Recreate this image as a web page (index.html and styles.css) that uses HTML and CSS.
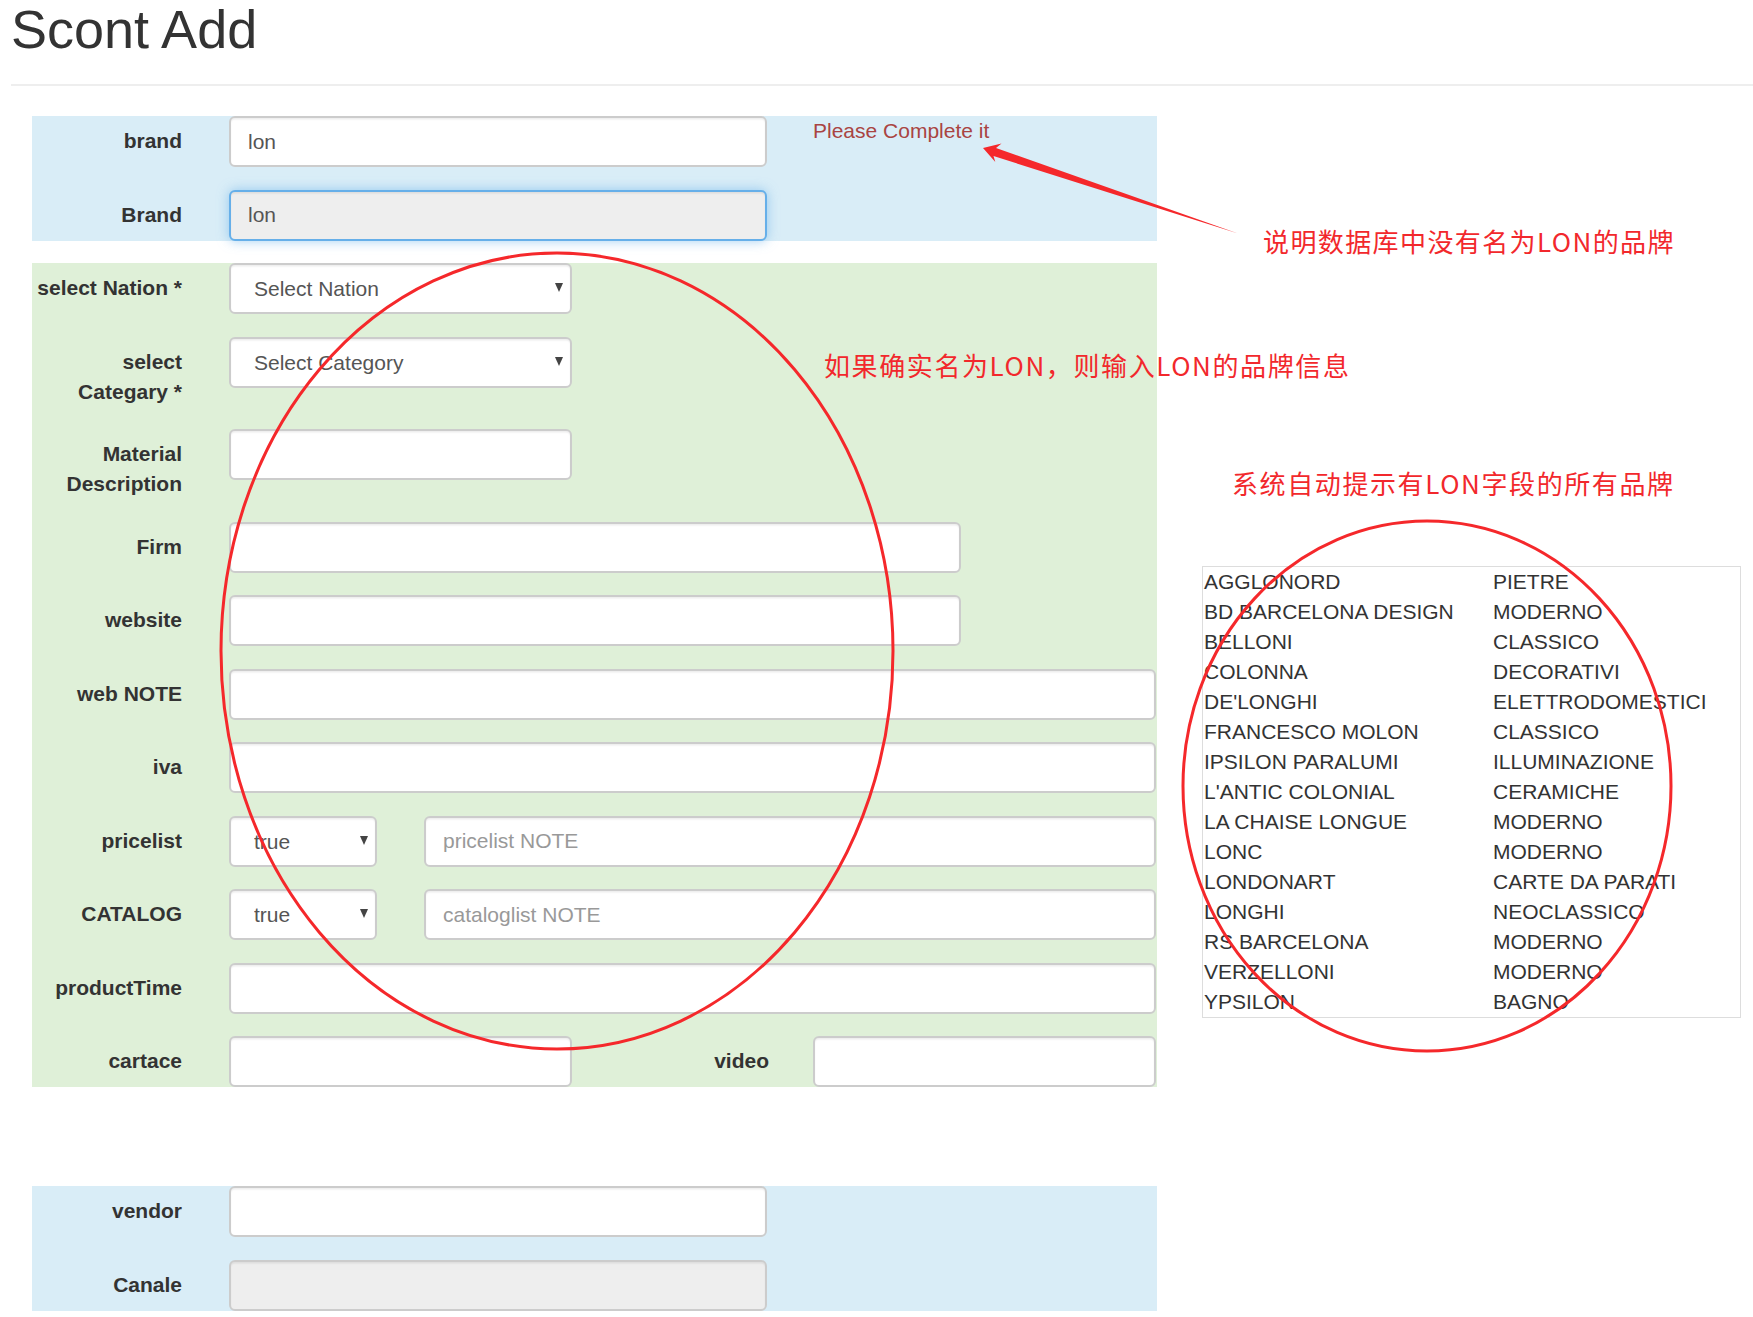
FILE: index.html
```html
<!DOCTYPE html>
<html lang="it">
<head>
<meta charset="utf-8">
<title>Scont Add</title>
<link rel="stylesheet" href="styles.css">
</head>
<body>
<div class="page">
  <header class="page-header">
    <h1>Scont Add</h1>
  </header>
  <hr class="rule">

  <form class="scont-form">
    <section class="band band-info">
      <div class="row">
        <label class="lbl">brand</label>
        <input class="ctl w-half" type="text" value="lon">
        <span class="help">Please Complete it</span>
      </div>
      <div class="row">
        <label class="lbl">Brand</label>
        <input class="ctl w-half ctl-ro ctl-focus" type="text" value="lon" readonly>
      </div>
    </section>

    <section class="band band-success">
      <div class="row">
        <label class="lbl">select Nation *</label>
        <div class="sel w-third"><select class="ctl"><option>Select Nation</option></select></div>
      </div>
      <div class="row">
        <label class="lbl">select Categary *</label>
        <div class="sel w-third"><select class="ctl"><option>Select Category</option></select></div>
      </div>
      <div class="row">
        <label class="lbl">Material Description</label>
        <input class="ctl w-third" type="text">
      </div>
      <div class="row">
        <label class="lbl">Firm</label>
        <input class="ctl w-wide" type="text">
      </div>
      <div class="row">
        <label class="lbl">website</label>
        <input class="ctl w-wide" type="text">
      </div>
      <div class="row">
        <label class="lbl">web NOTE</label>
        <input class="ctl w-full" type="text">
      </div>
      <div class="row">
        <label class="lbl">iva</label>
        <input class="ctl w-full" type="text">
      </div>
      <div class="row">
        <label class="lbl">pricelist</label>
        <div class="sel w-mini"><select class="ctl"><option>true</option><option>false</option></select></div>
        <input class="ctl w-wide note-input" type="text" placeholder="pricelist NOTE">
      </div>
      <div class="row">
        <label class="lbl">CATALOG</label>
        <div class="sel w-mini"><select class="ctl"><option>true</option><option>false</option></select></div>
        <input class="ctl w-wide note-input" type="text" placeholder="cataloglist NOTE">
      </div>
      <div class="row">
        <label class="lbl">productTime</label>
        <input class="ctl w-full" type="text">
      </div>
      <div class="row">
        <label class="lbl">cartace</label>
        <input class="ctl w-third" type="text">
        <label class="lbl lbl-inline">video</label>
        <input class="ctl w-third" type="text">
      </div>
    </section>

    <section class="band band-info band-vendor">
      <div class="row">
        <label class="lbl">vendor</label>
        <input class="ctl w-half" type="text">
      </div>
      <div class="row">
        <label class="lbl">Canale</label>
        <input class="ctl w-half ctl-ro" type="text" readonly>
      </div>
    </section>
  </form>

  <div class="suggest">
    <div class="sg-row"><span>AGGLONORD</span><span>PIETRE</span></div>
    <div class="sg-row"><span>BD BARCELONA DESIGN</span><span>MODERNO</span></div>
    <div class="sg-row"><span>BELLONI</span><span>CLASSICO</span></div>
    <div class="sg-row"><span>COLONNA</span><span>DECORATIVI</span></div>
    <div class="sg-row"><span>DE'LONGHI</span><span>ELETTRODOMESTICI</span></div>
    <div class="sg-row"><span>FRANCESCO MOLON</span><span>CLASSICO</span></div>
    <div class="sg-row"><span>IPSILON PARALUMI</span><span>ILLUMINAZIONE</span></div>
    <div class="sg-row"><span>L'ANTIC COLONIAL</span><span>CERAMICHE</span></div>
    <div class="sg-row"><span>LA CHAISE LONGUE</span><span>MODERNO</span></div>
    <div class="sg-row"><span>LONC</span><span>MODERNO</span></div>
    <div class="sg-row"><span>LONDONART</span><span>CARTE DA PARATI</span></div>
    <div class="sg-row"><span>LONGHI</span><span>NEOCLASSICO</span></div>
    <div class="sg-row"><span>RS BARCELONA</span><span>MODERNO</span></div>
    <div class="sg-row"><span>VERZELLONI</span><span>MODERNO</span></div>
    <div class="sg-row"><span>YPSILON</span><span>BAGNO</span></div>
  </div>

  <svg class="marks" width="1753" height="1317" viewBox="0 0 1753 1317" aria-hidden="true">
    <ellipse cx="557" cy="651" rx="336" ry="398" class="ring"/>
    <ellipse cx="1427" cy="786" rx="244" ry="265" class="ring"/>
    <polygon class="arrow" points="983,148 1001.5,143.5 996,148 1238,233.5 993.5,156 995.3,162"/>
  </svg>

  <p class="note note-1">说明数据库中没有名为LON的品牌</p>
  <p class="note note-2">如果确实名为LON，则输入LON的品牌信息</p>
  <p class="note note-3">系统自动提示有LON字段的所有品牌</p>
</div>
</body>
</html>
```

FILE: styles.css
```css
html, body {
  margin: 0;
  padding: 0;
  background: #fff;
}

body {
  font-family: "Liberation Sans", Arial, sans-serif;
  color: #333;
  overflow: hidden;
}

.page {
  position: relative;
  width: 1753px;
  height: 1317px;
}

.page-header {
  padding-left: 11px;
}

.page-header h1 {
  margin: 0;
  font-size: 54px;
  line-height: 58px;
  font-weight: normal;
  color: #333;
}

.rule {
  margin: 26px 0 30px 11px;
  height: 0;
  border: 0;
  border-top: 2px solid #eee;
}

.scont-form {
  margin-left: 32px;
  width: 1125px;
  display: flex;
  flex-direction: column;
}

.band {
  display: flex;
  flex-direction: column;
  gap: 22.5px;
}

.band-info {
  background: #d9edf7;
}

.band-success {
  background: #dff0d8;
  margin-top: 22.5px;
}

.band-vendor {
  margin-top: 99px;
}

.row {
  display: flex;
  align-items: flex-start;
}

.lbl {
  flex: none;
  width: 150px;
  margin-right: 47px;
  padding-top: 10px;
  font-size: 21px;
  line-height: 30px;
  font-weight: bold;
  text-align: right;
  color: #333;
}

.lbl-inline {
  width: 197px;
  margin-right: 44px;
}

.ctl {
  box-sizing: border-box;
  height: 51px;
  margin: 0;
  padding: 0 17px;
  border: 2px solid #ccc;
  border-radius: 6px;
  background: #fff;
  font-family: "Liberation Sans", Arial, sans-serif;
  font-size: 21px;
  color: #555;
  box-shadow: inset 0 1.5px 1.5px rgba(0, 0, 0, 0.075);
  outline: none;
}

.ctl::placeholder {
  color: #999;
}

.ctl-ro {
  background: #eee;
}

.ctl-focus {
  border-color: #66afe9;
  box-shadow: inset 0 1.5px 1.5px rgba(0, 0, 0, 0.075), 0 0 12px rgba(102, 175, 233, 0.6);
}

.w-half { width: 538px; }
.w-third { width: 343px; }
.w-wide { width: 732px; }
.w-full { width: 927px; }
.w-mini { width: 148px; }

.note-input {
  margin-left: 47px;
}

.sel {
  position: relative;
  flex: none;
}

.sel select {
  width: 100%;
  padding-left: 23px;
  -webkit-appearance: none;
  appearance: none;
}

.sel::after {
  content: "";
  position: absolute;
  right: 9px;
  top: 20px;
  width: 0;
  height: 0;
  border-left: 4.5px solid transparent;
  border-right: 4.5px solid transparent;
  border-top: 9px solid #444;
  pointer-events: none;
}

.help {
  margin-left: 46px;
  font-size: 21px;
  line-height: 30px;
  color: #a94442;
}

/* autocomplete list */
.suggest {
  position: absolute;
  left: 1202px;
  top: 566px;
  width: 539px;
  box-sizing: border-box;
  border: 1px solid #ddd;
  background: #fff;
  padding-left: 1px;
}

.sg-row {
  display: grid;
  grid-template-columns: 289px 1fr;
  font-size: 21px;
  line-height: 30px;
  color: #333;
  white-space: nowrap;
}

/* red annotation drawing */
.marks {
  position: absolute;
  left: 0;
  top: 0;
  pointer-events: none;
}

.ring {
  fill: none;
  stroke: #f5282b;
  stroke-width: 3;
}

.arrow {
  fill: #f5282b;
}

.note {
  position: absolute;
  margin: 0;
  font-family: "Noto Sans CJK SC", "Liberation Sans", sans-serif;
  font-size: 26px;
  line-height: 30px;
  color: #f2282c;
  white-space: nowrap;
}

.note-1 {
  left: 1263px;
  top: 226px;
  letter-spacing: 1.4px;
}

.note-2 {
  left: 824px;
  top: 350px;
  letter-spacing: 1.6px;
}

.note-3 {
  left: 1232px;
  top: 468px;
  letter-spacing: 1.6px;
}
```
